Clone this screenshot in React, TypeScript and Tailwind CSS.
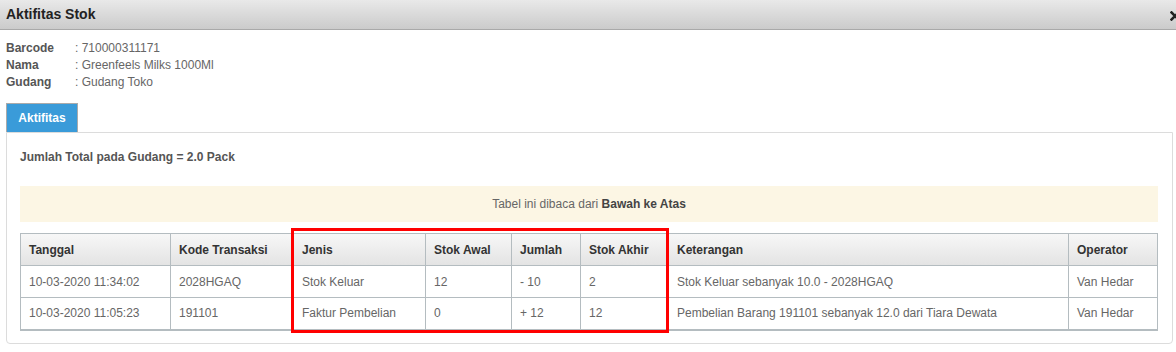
import React from "react";

const cols = [150, 123, 132, 86, 69, 88, 400, 89];
const headers = ["Tanggal", "Kode Transaksi", "Jenis", "Stok Awal", "Jumlah", "Stok Akhir", "Keterangan", "Operator"];
const rows = [
  ["10-03-2020 11:34:02", "2028HGAQ", "Stok Keluar", "12", "- 10", "2", "Stok Keluar sebanyak 10.0 - 2028HGAQ", "Van Hedar"],
  ["10-03-2020 11:05:23", "191101", "Faktur Pembelian", "0", "+ 12", "12", "Pembelian Barang 191101 sebanyak 12.0 dari Tiara Dewata", "Van Hedar"],
];

export default function App() {
  return (
    <div className="relative w-[1176px] h-[352px] overflow-hidden bg-white text-[12px] text-[#555]" style={{ fontFamily: '"Liberation Sans", Arial, sans-serif' }}>
      <div className="flex h-[30px] items-center justify-between border-b border-[#a9a9a9] bg-gradient-to-b from-[#e9e9e9] to-[#cbcbcb] pl-[6px]">
        <span className="text-[14px] font-bold text-[#222]">Aktifitas Stok</span>
        <svg width="10" height="10" viewBox="0 0 10 10" className="mr-[-4px] mt-[2px]">
          <path d="M1.5 1.5 L8.5 8.5 M8.5 1.5 L1.5 8.5" stroke="#222" strokeWidth="2.6" strokeLinecap="square" />
        </svg>
      </div>
      <div className="pl-[6px] pt-[10px] leading-[17px]">
        <div className="flex"><span className="w-[69px] font-bold text-[#555]">Barcode</span><span className="text-[#666]">: 710000311171</span></div>
        <div className="flex"><span className="w-[69px] font-bold text-[#555]">Nama</span><span className="text-[#666]">: Greenfeels Milks 1000Ml</span></div>
        <div className="flex"><span className="w-[69px] font-bold text-[#555]">Gudang</span><span className="text-[#666]">: Gudang Toko</span></div>
      </div>
      <div className="ml-[6px] mt-[12px] w-[1167px]">
        <div className="flex h-[29px] w-[72px] items-center justify-center border border-b-0 border-[#aaa] bg-[#3a9bd9] font-bold text-white">
          Aktifitas
        </div>
        <div className="relative h-[212px] rounded-b-[4px] border border-[#dcdcdc] px-[13px]">
          <div className="pt-[17px] font-bold leading-[14px] text-[#555]">Jumlah Total pada Gudang = 2.0 Pack</div>
          <div className="mt-[22px] flex h-[36px] w-[1138px] items-center justify-center bg-[#fcf6e4] text-[#666]">
            <span>Tabel ini dibaca dari <b className="text-[#444]">Bawah ke Atas</b></span>
          </div>
          <table className="mt-[11px] w-[1138px] table-fixed border-collapse border border-b-2 border-[#b4bcc0]">
            <colgroup>
              {cols.map((w, i) => (
                <col key={i} style={{ width: w }} />
              ))}
            </colgroup>
            <thead>
              <tr className="h-[32px] bg-gradient-to-b from-[#f7f7f7] to-[#e3e3e3]">
                {headers.map((h) => (
                  <th key={h} className="border border-[#b4bcc0] px-[8px] pt-[1px] text-left font-bold text-[#333]">{h}</th>
                ))}
              </tr>
            </thead>
            <tbody>
              {rows.map((r, i) => (
                <tr key={i} className="h-[32px]">
                  {r.map((c, j) => (
                    <td key={j} className="border border-[#b4bcc0] px-[8px] text-[#666]">{c}</td>
                  ))}
                </tr>
              ))}
            </tbody>
          </table>
        </div>
      </div>
      <div className="absolute left-[291px] top-[228px] h-[105px] w-[378px] border-[3px] border-[#ff0000]" />
    </div>
  );
}
